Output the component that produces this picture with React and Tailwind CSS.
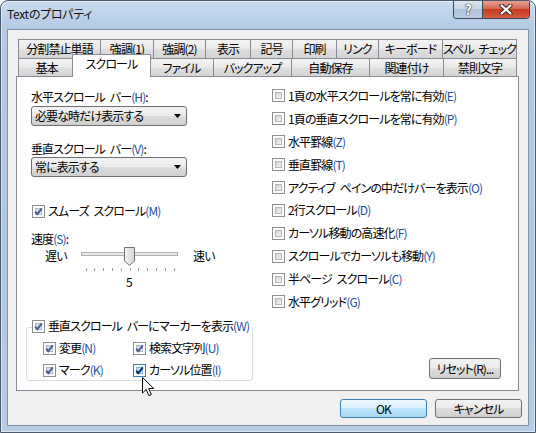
import React from 'react';

const tabsBack = [
  ['分割禁止単語', 'w-[82px]'],
  ['強調(1)', 'w-[53px]'],
  ['強調(2)', 'w-[52px]'],
  ['表示', 'w-[45px]'],
  ['記号', 'w-[42px]'],
  ['印刷', 'w-[44px]'],
  ['リンク', 'w-[42px]'],
  ['キーボード', 'w-[64px]'],
  ['スペル チェック', 'w-[75px]'],
];

const tabsFront = [
  ['基本', 'w-[56px]'],
  ['スクロール', 'w-[75px]', true],
  ['ファイル', 'w-[64px]'],
  ['バックアップ', 'w-[78px]'],
  ['自動保存', 'w-[78px]'],
  ['関連付け', 'w-[74px]'],
  ['禁則文字', 'w-[74px]'],
];

const rightOptions = [
  ['1頁の水平スクロールを常に有効', '(E)'],
  ['1頁の垂直スクロールを常に有効', '(P)'],
  ['水平罫線', '(Z)'],
  ['垂直罫線', '(T)'],
  ['アクティブ ペインの中だけバーを表示', '(O)'],
  ['2行スクロール', '(D)'],
  ['カーソル移動の高速化', '(F)'],
  ['スクロールでカーソルも移動', '(Y)'],
  ['半ページ スクロール', '(C)'],
  ['水平グリッド', '(G)'],
];

// ── mnemonic in blue ──
function Key({ children }) {
  return <span className="text-[#1d4fa6]">{children}</span>;
}

// ── Win7 style checkbox ──
function Box({ checked, hover }) {
  return (
    <span
      className={`relative flex h-[13px] w-[13px] shrink-0 items-center justify-center border bg-white ${
        hover ? 'border-[#3c7fb1]' : 'border-[#8e8f8f]'
      }`}
    >
      <span
        className={`absolute inset-[2px] border ${
          hover
            ? 'border-[#79b8e0] bg-[linear-gradient(135deg,#b6def6_0%,#e8f6fd_100%)]'
            : 'border-[#b3b6ba] bg-[linear-gradient(135deg,#cfd2d6_0%,#f4f4f4_100%)]'
        }`}
      />
      {checked && (
        <svg width="11" height="11" viewBox="0 0 11 11" className="relative">
          <path
            d="M2.2 5.6 L4.4 8.2 L8.8 2.4"
            fill="none"
            stroke={hover ? '#142c66' : '#46609a'}
            strokeWidth="2"
          />
        </svg>
      )}
    </span>
  );
}

function Check({ checked, hover, children }) {
  return (
    <div className="flex h-[16px] items-center gap-[3px] leading-[16px]">
      <Box checked={checked} hover={hover} />
      <span className="whitespace-nowrap">{children}</span>
    </div>
  );
}

function Dropdown({ value }) {
  return (
    <div className="flex h-[20px] w-[156px] items-center justify-between rounded-[3px] border border-[#707070] bg-[linear-gradient(180deg,#f2f2f2_0%,#ebebeb_50%,#dddddd_50%,#cfcfcf_100%)] pl-[3px] pr-[5px] leading-[16px]">
      <span>{value}</span>
      <svg width="7" height="4" viewBox="0 0 7 4">
        <path d="M0 0 H7 L3.5 4 Z" fill="#000" />
      </svg>
    </div>
  );
}

function Button({ children, primary, className = '' }) {
  return (
    <div
      className={`flex items-center justify-center rounded-[3px] border leading-[16px] ${
        primary
          ? 'border-[#3c7fb1] bg-[linear-gradient(180deg,#eaf6fd_0%,#d9f0fc_50%,#bee6fd_50%,#a7d9f5_100%)]'
          : 'border-[#707070] bg-[linear-gradient(180deg,#f2f2f2_0%,#ebebeb_50%,#dddddd_50%,#cfcfcf_100%)]'
      } ${className}`}
    >
      {children}
    </div>
  );
}

function Slider() {
  const ticks = Array.from({ length: 11 }, (_, i) => 4.5 + i * 8.8);
  return (
    <svg width="97" height="24" viewBox="0 0 97 24">
      <rect x="0.5" y="5.5" width="96" height="3" fill="#e7eaea" stroke="#b0b0b0" />
      {ticks.map((x) => (
        <line key={x} x1={Math.round(x) + 0.5} y1="21" x2={Math.round(x) + 0.5} y2="24" stroke="#a0a0a0" />
      ))}
      <defs>
        <linearGradient id="thumb" x1="0" y1="0" x2="1" y2="0">
          <stop offset="0" stopColor="#f4f4f4" />
          <stop offset="1" stopColor="#d4d4d4" />
        </linearGradient>
      </defs>
      <path d="M43.5 0.5 H53.5 V14 L48.5 18.5 L43.5 14 Z" fill="url(#thumb)" stroke="#707070" />
    </svg>
  );
}

export default function App() {
  return (
    <div className="relative h-[433px] w-[536px] overflow-hidden rounded-t-[8px] border border-[#4b5a6b] bg-[linear-gradient(180deg,#cadbee_0px,#b3cae4_28px,#adc6e1_60%,#b6cde6_100%)] font-['Noto_Sans_CJK_JP','Noto_Sans',sans-serif] text-[12px] tracking-[-0.9px] text-black shadow-[inset_0_0_0_1px_rgba(255,255,255,0.55)] [font-feature-settings:'palt'] [word-spacing:3px]">
      {/* ── Title bar ── */}
      <div className="flex h-[28px] items-start">
        <div className="ml-[6px] mt-[5px] leading-[16px] tracking-[-0.3px] text-[#111]">Textのプロパティ</div>
        <div className="ml-auto mr-[5px] flex h-[19px] -mt-[1px] overflow-hidden rounded-b-[4px] border border-t-0 border-[#3b4859]">
          <div className="flex w-[29px] items-center justify-center border-r border-[#3b4859] bg-[linear-gradient(180deg,#dfe8f2_0%,#c6d4e4_50%,#b0c2d7_50%,#bccde0_100%)]">
            <span className="text-[14px] font-bold leading-none text-white [text-shadow:0_0_1px_#333,0_0_1px_#333,0_0_1px_#333]">?</span>
          </div>
          <div className="flex w-[46px] items-center justify-center bg-[linear-gradient(180deg,#e9a898_0%,#d66a55_48%,#c43b24_52%,#d65a3f_100%)]">
            <svg width="14" height="11" viewBox="0 0 14 11">
              <path d="M2.5 1.5 L11.5 9.5 M11.5 1.5 L2.5 9.5" stroke="#3c2a28" strokeWidth="4.2" strokeLinecap="round" />
              <path d="M2.5 1.5 L11.5 9.5 M11.5 1.5 L2.5 9.5" stroke="#fff" strokeWidth="2.2" strokeLinecap="round" />
            </svg>
          </div>
        </div>
      </div>

      {/* ── Client area ── */}
      <div className="mx-[6px] flex h-[397px] flex-col border border-[#7f93ab] bg-[#f0f0f0] pl-[8px] pr-[8px]">
        {/* Tabs */}
        <div className="mt-[9px] w-[503px] px-[2px]">
          <div className="flex h-[19px]">
            {tabsBack.map(([label, w], i) => (
              <div
                key={label}
                className={`${w} flex items-start justify-center whitespace-nowrap border-l border-t border-[#898c95] bg-[linear-gradient(180deg,#f3f3f3_0%,#ebebeb_45%,#dedede_55%,#d4d4d4_100%)] pt-[1px] leading-[16px] ${
                  i === tabsBack.length - 1 ? 'border-r' : ''
                }`}
              >
                {label}
              </div>
            ))}
          </div>
          <div className="flex h-[18px] items-end">
            {tabsFront.map(([label, w, sel], i) =>
              sel ? (
                <div
                  key={label}
                  className={`${w} relative z-10 -mx-[2px] -mb-[1px] box-content flex h-[21px] justify-center whitespace-nowrap border-x border-t border-[#898c95] bg-white px-[1px] pt-[1px] leading-[16px]`}
                >
                  {label}
                </div>
              ) : (
                <div
                  key={label}
                  className={`${w} flex h-[18px] items-center justify-center whitespace-nowrap border-l border-t border-[#898c95] bg-[linear-gradient(180deg,#f3f3f3_0%,#ebebeb_45%,#dedede_55%,#d4d4d4_100%)] leading-[16px] ${
                    i === tabsFront.length - 1 ? 'border-r' : ''
                  }`}
                >
                  {label}
                </div>
              )
            )}
          </div>
        </div>

        {/* Panel */}
        <div className="flex h-[315px] w-[503px] border border-[#898c95] bg-white">
          {/* Left column */}
          <div className="flex w-[255px] shrink-0 flex-col pl-[14px]">
            <div className="mt-[12px] h-[16px] leading-[16px]">
              水平スクロール バー<Key>(H)</Key>:
            </div>
            <div className="mt-[1px]">
              <Dropdown value="必要な時だけ表示する" />
            </div>
            <div className="mt-[15px] h-[16px] leading-[16px]">
              垂直スクロール バー<Key>(V)</Key>:
            </div>
            <Dropdown value="常に表示する" />

            <div className="mt-[26px] pl-[1px]">
              <Check checked>
                スムーズ スクロール<Key>(M)</Key>
              </Check>
            </div>

            <div className="mt-[12px] h-[16px] leading-[16px]">
              速度<Key>(S)</Key>:
            </div>
            <div className="flex h-[24px] items-start pl-[14px]">
              <span className="mt-[1px] w-[36px] leading-[16px]">遅い</span>
              <Slider />
              <span className="ml-[15px] mt-[1px] leading-[16px]">速い</span>
            </div>
            <div className="mt-[3px] h-[16px] pl-[95px] leading-[16px]">5</div>

            {/* Marker group */}
            <div className="-ml-[5px] mt-[37px] h-[54px] w-[227px] rounded-[3px] border border-[#d5dfe5] pl-[5px]">
              <div className="-mt-[10px] w-fit bg-white pr-[2px]">
                <Check checked>
                  垂直スクロール バーにマーカーを表示<Key>(W)</Key>
                </Check>
              </div>
              <div className="mt-[6px] flex pl-[11px]">
                <div className="w-[90px]">
                  <Check checked>
                    変更<Key>(N)</Key>
                  </Check>
                </div>
                <Check checked>
                  検索文字列<Key>(U)</Key>
                </Check>
              </div>
              <div className="mt-[6px] flex pl-[11px]">
                <div className="w-[90px]">
                  <Check checked>
                    マーク<Key>(K)</Key>
                  </Check>
                </div>
                <Check checked hover>
                  カーソル位置<Key>(I)</Key>
                </Check>
              </div>
            </div>
          </div>

          {/* Right column */}
          <div className="flex flex-1 flex-col pt-[7.5px]">
            {rightOptions.map(([label, key]) => (
              <div key={label} className="flex h-[22.9px] items-center">
                <Check>
                  {label}
                  <Key>{key}</Key>
                </Check>
              </div>
            ))}
            <Button className="mb-[11px] mr-[17px] mt-auto h-[21px] w-[72px] self-end">
              リセット(R)...
            </Button>
          </div>
        </div>

        {/* Dialog buttons */}
        <div className="mt-[8px] flex justify-end gap-[8px]">
          <Button primary className="h-[19px] w-[87px]">
            OK
          </Button>
          <Button className="-mr-[2px] h-[19px] w-[87px]">キャンセル</Button>
        </div>
      </div>

      {/* Mouse cursor */}
      <svg className="absolute left-[141px] top-[376px]" width="13" height="20" viewBox="0 0 13 20">
        <path
          d="M0.5 0.5 V16 L4.2 12.4 L6.9 18.6 L9.3 17.6 L6.7 11.5 H11.7 Z"
          fill="#fff"
          stroke="#000"
          strokeLinejoin="round"
        />
      </svg>
    </div>
  );
}
